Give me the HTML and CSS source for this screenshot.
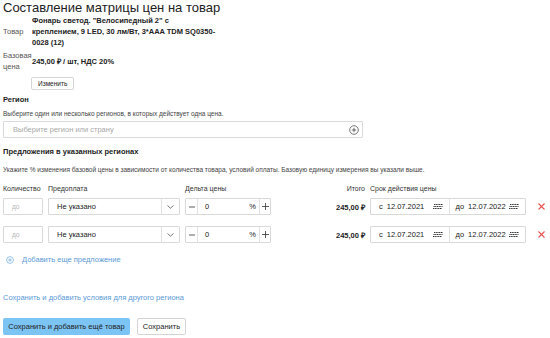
FILE: index.html
```html
<!DOCTYPE html>
<html lang="ru">
<head>
<meta charset="utf-8">
<title>Составление матрицы цен на товар</title>
<link rel="stylesheet" href="styles.css">
</head>
<body>
<div class="page">
  <h1 class="title">Составление матрицы цен на товар</h1>

  <div class="field product">
    <div class="field-label">Товар</div>
    <div class="field-value product-name">Фонарь светод. "Велосипедный 2" с креплением, 9 LED, 30 лм/Вт, 3*AAA TDM SQ0350-0028 (12)</div>
  </div>

  <div class="field base-price">
    <div class="field-label">Базовая цена</div>
    <div class="field-value price-value">245,00 ₽ / шт, НДС 20%</div>
  </div>

  <button class="btn btn-small change-btn">Изменить</button>

  <h2 class="section-title">Регион</h2>
  <p class="hint">Выберите один или несколько регионов, в которых действует одна цена.</p>
  <div class="region-input">
    <span class="placeholder">Выберите регион или страну</span>
    <svg class="icon-add" width="10" height="10" viewBox="0 0 10 10"><circle cx="5" cy="5" r="4.3" fill="none" stroke="#555" stroke-width="0.8"/><path d="M5 2.8v4.4M2.8 5h4.4" stroke="#444" stroke-width="0.8"/></svg>
  </div>

  <h2 class="section-title offers-title">Предложения в указанных регионах</h2>
  <p class="hint hint-offers">Укажите % изменения базовой цены в зависимости от количества товара, условий оплаты. Базовую единицу измерения вы указали выше.</p>

  <div class="offer-grid offer-head">
    <div>Количество</div>
    <div>Предоплата</div>
    <div>Дельта цены</div>
    <div class="right">Итого</div>
    <div>Срок действия цены</div>
    <div></div>
  </div>

  <div class="offer-grid offer-row">
    <div class="box qty"><span class="ph">до</span></div>
    <div class="box select"><span class="select-text">Не указано</span><span class="select-arrow"><svg width="7" height="4" viewBox="0 0 7 4"><path d="M0.5 0.5L3.5 3.2L6.5 0.5" fill="none" stroke="#555" stroke-width="0.8"/></svg></span></div>
    <div class="box delta"><span class="step"><svg width="6" height="6" viewBox="0 0 6 6"><path d="M0 3h6" stroke="#333" stroke-width="0.8"/></svg></span><span class="delta-val">0</span><span class="pct">%</span><span class="step step-plus"><svg width="7" height="7" viewBox="0 0 7 7"><path d="M0 3.5h7M3.5 0v7" stroke="#333" stroke-width="0.8"/></svg></span></div>
    <div class="total">245,00 ₽</div>
    <div class="box dates">
      <span class="date"><span class="pre">с</span><span class="dv">12.07.2021</span><svg class="cal" width="12" height="5" viewBox="0 0 12 5"><path d="M2 0.5h9M1.5 2.5h9M1 4.5h9" stroke="#333" stroke-width="1" stroke-dasharray="1.2 0.5"/></svg></span>
      <span class="date date-to"><span class="pre">до</span><span class="dv">12.07.2022</span><svg class="cal" width="12" height="5" viewBox="0 0 12 5"><path d="M2 0.5h9M1.5 2.5h9M1 4.5h9" stroke="#333" stroke-width="1" stroke-dasharray="1.2 0.5"/></svg></span>
    </div>
    <div class="remove"><svg width="7" height="7" viewBox="0 0 7 7"><path d="M0.5 0.5l6 6M6.5 0.5l-6 6" stroke="#e8504f" stroke-width="1.1"/></svg></div>
  </div>

  <div class="offer-grid offer-row">
    <div class="box qty"><span class="ph">до</span></div>
    <div class="box select"><span class="select-text">Не указано</span><span class="select-arrow"><svg width="7" height="4" viewBox="0 0 7 4"><path d="M0.5 0.5L3.5 3.2L6.5 0.5" fill="none" stroke="#555" stroke-width="0.8"/></svg></span></div>
    <div class="box delta"><span class="step"><svg width="6" height="6" viewBox="0 0 6 6"><path d="M0 3h6" stroke="#333" stroke-width="0.8"/></svg></span><span class="delta-val">0</span><span class="pct">%</span><span class="step step-plus"><svg width="7" height="7" viewBox="0 0 7 7"><path d="M0 3.5h7M3.5 0v7" stroke="#333" stroke-width="0.8"/></svg></span></div>
    <div class="total">245,00 ₽</div>
    <div class="box dates">
      <span class="date"><span class="pre">с</span><span class="dv">12.07.2021</span><svg class="cal" width="12" height="5" viewBox="0 0 12 5"><path d="M2 0.5h9M1.5 2.5h9M1 4.5h9" stroke="#333" stroke-width="1" stroke-dasharray="1.2 0.5"/></svg></span>
      <span class="date date-to"><span class="pre">до</span><span class="dv">12.07.2022</span><svg class="cal" width="12" height="5" viewBox="0 0 12 5"><path d="M2 0.5h9M1.5 2.5h9M1 4.5h9" stroke="#333" stroke-width="1" stroke-dasharray="1.2 0.5"/></svg></span>
    </div>
    <div class="remove"><svg width="7" height="7" viewBox="0 0 7 7"><path d="M0.5 0.5l6 6M6.5 0.5l-6 6" stroke="#e8504f" stroke-width="1.1"/></svg></div>
  </div>

  <a class="link add-offer" href="#"><svg width="8" height="8" viewBox="0 0 8 8"><circle cx="4" cy="4" r="3.4" fill="none" stroke="#6aa6dc" stroke-width="0.7"/><path d="M4 2.2v3.6M2.2 4h3.6" stroke="#6aa6dc" stroke-width="0.7"/></svg><span>Добавить еще предложение</span></a>

  <a class="link other-region" href="#">Сохранить и добавить условия для другого региона</a>

  <div class="actions">
    <button class="btn btn-primary">Сохранить и добавить ещё товар</button>
    <button class="btn btn-default">Сохранить</button>
  </div>
</div>
</body>
</html>
```

FILE: styles.css
```css
* { box-sizing: border-box; }

body {
  margin: 0;
  background: #fff;
  color: #222;
  font-family: "Liberation Sans", Arial, sans-serif;
}

.page {
  padding: 0 3px;
}

.title {
  margin: 0;
  padding-top: 1px;
  font-size: 13px;
  line-height: 14px;
  font-weight: normal;
  color: #222;
}

.field {
  display: flex;
  align-items: center;
}

.field-label {
  width: 29px;
  flex: none;
  font-size: 7.5px;
  line-height: 11px;
  color: #555;
}

.field-value {
  font-size: 7.5px;
  line-height: 11px;
  font-weight: bold;
  color: #222;
}

.product-name {
  width: 184px;
}

.base-price {
  margin-top: 2px;
}

.btn {
  font-family: inherit;
  color: #222;
  cursor: pointer;
}

.btn-small {
  display: block;
  height: 13px;
  padding: 0 6px;
  font-size: 6.5px;
  background: #fff;
  border: 1px solid #d6d6d6;
  border-radius: 2px;
}

.change-btn {
  margin: 5px 0 0 28px;
}

.section-title {
  margin: 4px 0 0;
  font-size: 7.5px;
  line-height: 11px;
  font-weight: bold;
  color: #222;
}

.hint {
  margin: 4px 0 0;
  font-size: 6.5px;
  line-height: 10px;
  color: #444;
}

.region-input {
  margin-top: 2px;
  width: 360px;
  height: 17px;
  border: 1px solid #dadada;
  border-radius: 1px;
  display: flex;
  align-items: center;
  justify-content: space-between;
  padding: 0 3px 0 9px;
}

.placeholder {
  font-size: 7.5px;
  color: #a8a8a8;
}

.offers-title {
  margin-top: 8px;
}

.hint-offers {
  margin-top: 8px;
}

.offer-grid {
  display: grid;
  grid-template-columns: 40px 132px 86px 89px 156px 20px;
  column-gap: 5px;
  align-items: center;
}

.offer-head {
  margin-top: 9px;
  font-size: 7px;
  line-height: 10px;
  color: #333;
}

.right {
  text-align: right;
}

.offer-row {
  margin-top: 4px;
  height: 17px;
}

.offer-row + .offer-row {
  margin-top: 11px;
}

.box {
  height: 17px;
  border: 1px solid #d9d9d9;
  border-radius: 1px;
  display: flex;
  align-items: center;
  font-size: 7.5px;
  color: #222;
}

.qty {
  padding-left: 8px;
}

.ph {
  color: #b5b5b5;
  font-size: 6.5px;
}

.select {
  justify-content: space-between;
}

.select-text {
  padding-left: 8px;
}

.select-arrow {
  width: 18px;
  height: 100%;
  border-left: 1px solid #e2e2e2;
  display: flex;
  align-items: center;
  justify-content: center;
}

.delta {
  padding: 0;
}

.step {
  width: 12px;
  height: 100%;
  flex: none;
  display: flex;
  align-items: center;
  justify-content: center;
  border-right: 1px solid #e2e2e2;
}

.step-plus {
  width: 11px;
  border-right: 0;
  border-left: 1px solid #e2e2e2;
}

.delta-val {
  padding-left: 7px;
  flex: 1;
}

.pct {
  padding-right: 3px;
}

.total {
  text-align: right;
  font-size: 7.5px;
  font-weight: bold;
  color: #222;
}

.dates {
  padding: 0;
}

.date {
  flex: 1;
  height: 100%;
  display: flex;
  align-items: center;
  padding: 0 5px 0 8px;
}

.date-to {
  border-left: 1px solid #e2e2e2;
  padding-left: 6px;
}

.pre {
  margin-right: 4px;
}

.dv {
  flex: 1;
}

.remove {
  display: flex;
  align-items: center;
  justify-content: center;
}

.link {
  color: #5a9ad6;
  text-decoration: none;
  font-size: 7.5px;
  line-height: 12px;
}

.add-offer {
  margin-top: 11px;
  display: flex;
  align-items: center;
  gap: 8px;
  padding-left: 3px;
}

.other-region {
  display: block;
  margin-top: 26px;
}

.actions {
  margin-top: 14px;
  display: flex;
  gap: 7px;
}

.btn-primary {
  width: 127px;
  height: 17px;
  padding: 0;
  font-size: 7.5px;
  background: #7cc4f4;
  border: 0;
  border-radius: 2px;
}

.btn-default {
  width: 49px;
  height: 17px;
  padding: 0;
  font-size: 7.5px;
  background: #fff;
  border: 1px solid #d4d4d4;
  border-radius: 2px;
}
```
